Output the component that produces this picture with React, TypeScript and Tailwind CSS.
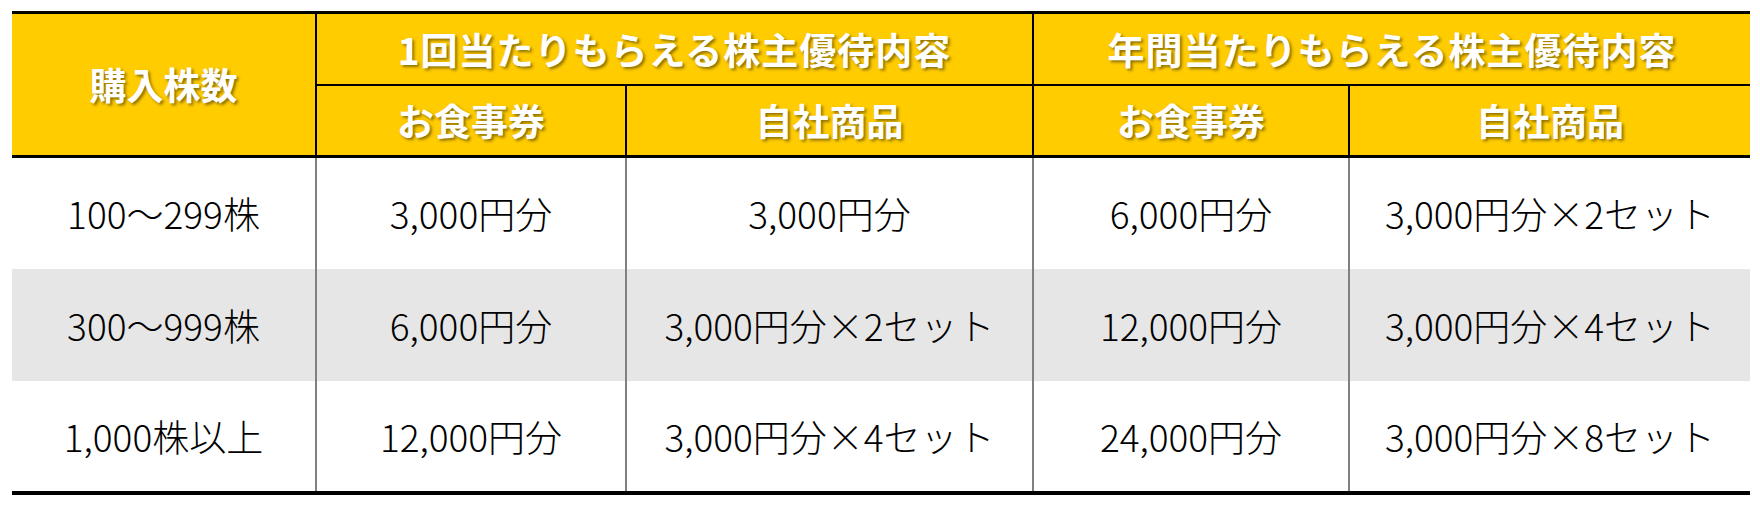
const font = { fontFamily: '"Noto Sans CJK JP", "Noto Sans", sans-serif' }

const rows = [
  {
    shares: '100～299株',
    cells: ['3,000円分', '3,000円分', '6,000円分', '3,000円分×2セット'],
    bg: 'bg-white',
  },
  {
    shares: '300～999株',
    cells: ['6,000円分', '3,000円分×2セット', '12,000円分', '3,000円分×4セット'],
    bg: 'bg-[#e7e6e6]',
  },
  {
    shares: '1,000株以上',
    cells: ['12,000円分', '3,000円分×4セット', '24,000円分', '3,000円分×8セット'],
    bg: 'bg-white',
  },
]

const heights = ['h-[111px]', 'h-[112px]', 'h-[110px]']

function HeadCell({ children, className = '' }: { children: React.ReactNode; className?: string }) {
  return (
    <div
      className={`flex items-center justify-center bg-[#ffcc00] text-white font-bold text-[37px] leading-none [text-shadow:2px_2px_3px_rgba(0,0,0,0.45)] ${className}`}
    >
      {children}
    </div>
  )
}

export default function App() {
  return (
    <div className="w-[1760px] h-[506px] bg-white pt-[11px] pl-[12px]" style={font}>
      <div className="w-[1738px] border-t-[3px] border-b-[4px] border-black">
        <div className="grid grid-cols-[303px_310px_407px_316px_402px] grid-rows-[70px_71px] border-b-[3px] border-black">
          <HeadCell className="row-span-2">購入株数</HeadCell>
          <HeadCell className="col-span-2 border-l-2 border-black tracking-[1px]">
            1回当たりもらえる株主優待内容
          </HeadCell>
          <HeadCell className="col-span-2 border-l-2 border-black tracking-[1px]">
            年間当たりもらえる株主優待内容
          </HeadCell>
          <HeadCell className="border-l-2 border-t-2 border-black">お食事券</HeadCell>
          <HeadCell className="border-l-2 border-t-2 border-black">自社商品</HeadCell>
          <HeadCell className="border-l-2 border-t-2 border-black">お食事券</HeadCell>
          <HeadCell className="border-l-2 border-t-2 border-black">自社商品</HeadCell>
        </div>
        {rows.map((row, i) => (
          <div
            key={row.shares}
            className={`grid grid-cols-[303px_310px_407px_316px_402px] ${heights[i]} ${row.bg} text-[37px] font-light leading-none text-black`}
          >
            <div className="flex items-center justify-center">{row.shares}</div>
            {row.cells.map((c, j) => (
              <div key={j} className="flex items-center justify-center border-l-2 border-[#808080]">
                {c}
              </div>
            ))}
          </div>
        ))}
      </div>
    </div>
  )
}
